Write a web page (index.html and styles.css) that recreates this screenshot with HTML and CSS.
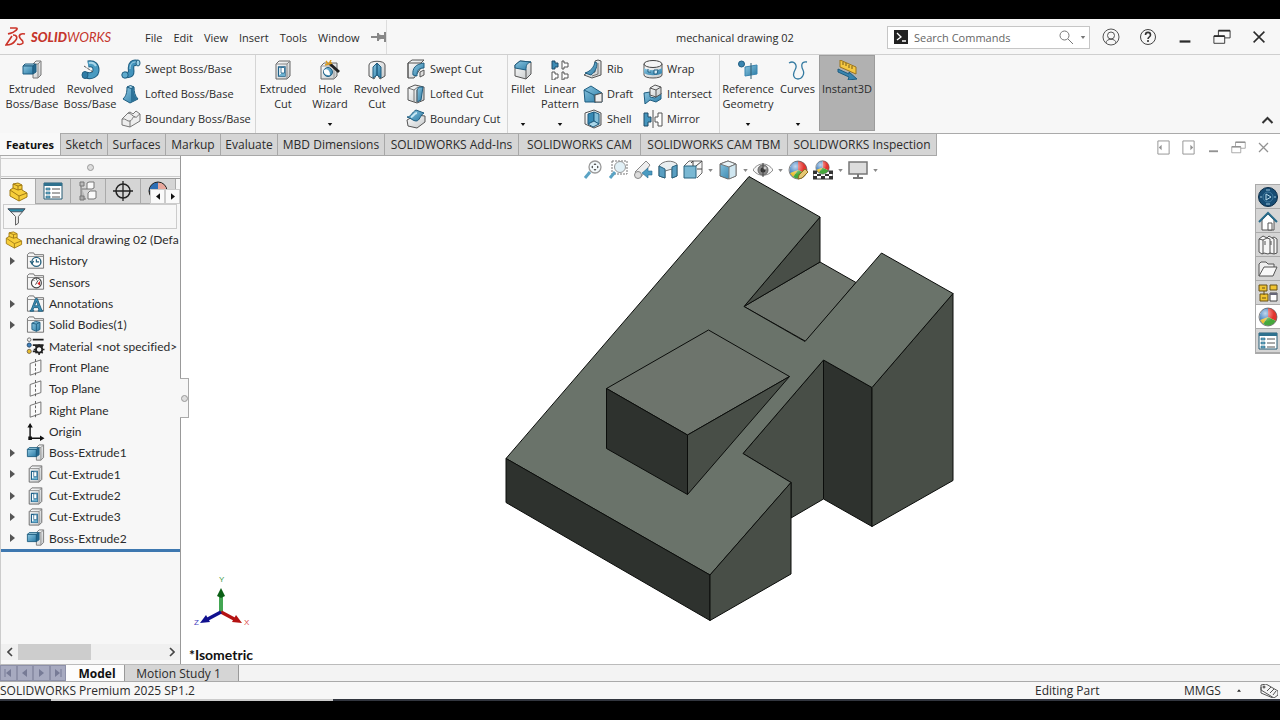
FILE: index.html
```html
<!DOCTYPE html>
<html lang="en">
<head>
<meta charset="utf-8">
<title>mechanical drawing 02 - SOLIDWORKS</title>
<link rel="stylesheet" href="styles.css">
</head>
<body>
<svg class="defs" aria-hidden="true">
  <defs>
    <linearGradient id="blue" x1="0" y1="0" x2="1" y2="1"><stop offset="0" stop-color="#8cc6e0"/><stop offset="1" stop-color="#2a7ba6"/></linearGradient>
    <linearGradient id="metal" x1="0" y1="0" x2="1" y2="1"><stop offset="0" stop-color="#fff"/><stop offset="1" stop-color="#c4c8ca"/></linearGradient>
    <radialGradient id="shine" cx=".35" cy=".3" r=".8"><stop offset="0" stop-color="#fff" stop-opacity=".7"/><stop offset=".6" stop-color="#fff" stop-opacity="0"/></radialGradient>
  </defs>
  <symbol id="i-extrude" viewBox="0 0 20 20"><path d="M11 4l3-3h5v14l-3 3h-5z" fill="url(#metal)" stroke="#777"/><path d="M16 4l3-3M16 4v14M11 4h5" fill="none" stroke="#888"/><path d="M1 6l2-2h10l-2 2z" fill="#a9d6e9" stroke="#1f5d80"/><path d="M1 6h10v8H1z" fill="url(#blue)" stroke="#1f5d80"/><path d="M11 6l3-2v8l-3 2z" fill="#23688f" stroke="#1f5d80"/></symbol>
  <symbol id="i-revolve" viewBox="0 0 20 20"><path d="M8 4c6-1 8 2 8 6s-4 7-10 5" fill="none" stroke="#1f5d80" stroke-width="7"/><path d="M8 4c6-1 8 2 8 6s-4 7-10 5" fill="none" stroke="#4a9bc1" stroke-width="5"/><path d="M9 3c4-1 6 1 7 3" fill="none" stroke="#a9d6e9" stroke-width="2"/><ellipse cx="5" cy="15" rx="3" ry="3.500" fill="#2e7ca6" stroke="#1f5d80"/><path d="M4 6l9 6" stroke="#555" stroke-dasharray="3 1"/></symbol>
  <symbol id="i-sweep" viewBox="0 0 20 20"><path d="M5 16c7 0 5-3 5-7s2-6 6-5" fill="none" stroke="#1f5d80" stroke-width="6.500"/><path d="M5 16c7 0 5-3 5-7s2-6 6-5" fill="none" stroke="#4394bd" stroke-width="4.500"/><path d="M9 10c0-5 2-7 6-7" fill="none" stroke="#a9d6e9"/><circle cx="4" cy="16" r="3.200" fill="#5fabcd" stroke="#1f5d80"/><ellipse cx="17" cy="4" rx="2" ry="3" fill="#9bd0e6" stroke="#1f5d80"/></symbol>
  <symbol id="i-loft" viewBox="0 0 20 20"><path d="M6 3c0 6-1 9-4 12l7 4 8-4c-3-3-4-7-4-12z" fill="url(#blue)" stroke="#1f5d80"/><path d="M10 4v14c4-2 6-3 6-3-3-3-4-7-3-12z" fill="#2d7298"/><path d="M6 3l3.500-1.500L13 3l-3 1.500z" fill="#a9d6e9" stroke="#1f5d80"/></symbol>
  <symbol id="i-boundary" viewBox="0 0 20 20"><path d="M1 10l6-6 2-1 3 2 3-3 4 3v7l-10 6-8-2z" fill="#eee" stroke="#777"/><path d="M1 10c4-1 5 3 8 2s2-5 5-4 2-2 5-3M9 12v6M7 4c3 0 4 3 7 4" fill="none" stroke="#777"/></symbol>
  <symbol id="i-cut" viewBox="0 0 20 20"><path d="M3 4l3-3h11v15l-3 3H3z" fill="url(#metal)" stroke="#666"/><path d="M3 4h11v15M14 4l3-3" fill="none" stroke="#888"/><path d="M5.500 7h6.500v9H5.500z" fill="#fff" stroke="#1f6088" stroke-width="1.300"/><path d="M5.500 16l3-3V7H12v9z" fill="#6db2d1"/><path d="M8 7.500h3.500V13H8z" fill="#fff" stroke="#1f6088" stroke-width=".8"/></symbol>
  <symbol id="i-hole" viewBox="0 0 20 20"><path d="M1 6l3-3h13v13l-3 3H1z" fill="url(#metal)" stroke="#666"/><path d="M1 6h13v13" fill="none" stroke="#999"/><circle cx="8" cy="12" r="4.500" fill="url(#blue)" stroke="#1f5d80"/><path d="M4 10c3-2 6 0 6 5-4 1-7-2-6-5z" fill="#fff"/><path d="M9 3l10 9" stroke="#222" stroke-width="3"/><path d="M6 1l2 3M11 0L9 4M5 5l4-1M12 3L9 4" stroke="#d99c22" stroke-width="1.500"/></symbol>
  <symbol id="i-revcut" viewBox="0 0 20 20"><path d="M2 5c0-5 16-5 16 0v11l-5 3-3-5-3 5-5-3z" fill="url(#metal)" stroke="#555"/><path d="M6 7l4-4v12l-4 3zM14 7l-4-4v12l4 3z" fill="url(#blue)" stroke="#1f5d80"/></symbol>
  <symbol id="i-swcut" viewBox="0 0 20 20"><path d="M2 4l4-3h12l-3 3v5L8 19H2z" fill="url(#metal)" stroke="#555"/><path d="M7 16c-1-7 3-11 11-12v5c-6 0-7 3-7 8z" fill="url(#blue)" stroke="#1f5d80"/><path d="M2 4h13M2 4v15" stroke="#555"/><path d="M14 13l4-2v5l-4 2z" fill="#ddd" stroke="#555"/></symbol>
  <symbol id="i-lcut" viewBox="0 0 20 20"><path d="M2 4l7-3 9 2v13l-7 3-9-3z" fill="url(#metal)" stroke="#555"/><path d="M11 6l2-3h4l-2 13-4 2z" fill="url(#blue)" stroke="#1f5d80"/><path d="M2 4l6 2v12M8 6l4-3M11 6v13" fill="none" stroke="#777"/></symbol>
  <symbol id="i-bcut" viewBox="0 0 20 20"><path d="M1 11l9-5 9 1v6l-8 6-9-2z" fill="url(#metal)" stroke="#555"/><path d="M1 8c4 0 5-5 9-7l8 3c-4 2-4 8-8 8-3 0-5-3-9-4z" fill="url(#blue)" stroke="#1f5d80"/><path d="M5 8c2 0 3-4 6-4" fill="none" stroke="#c9e8f4" stroke-width="2"/></symbol>
  <symbol id="i-fillet" viewBox="0 0 20 20"><path d="M2 5l5-4 11 1v12l-5 5-11-3z" fill="url(#metal)" stroke="#555"/><path d="M2 5l5-4 11 1c-4 1-5 3-5 8L2 8z" fill="url(#blue)" stroke="#1f5d80"/><path d="M13 10v9" stroke="#555"/></symbol>
  <symbol id="i-pattern" viewBox="0 0 20 20"><path d="M2 1h3v2h3v4H5v2H2z" fill="#3c8bb4" stroke="#1f4b66"/><path d="M12 1h2v2h4v4h-4v2h-2zM2 12h3v2h3v4H5v2H2zM12 12h2v2h4v4h-4v2h-2z" fill="#fff" stroke="#555"/></symbol>
  <symbol id="i-rib" viewBox="0 0 20 20"><path d="M12 2l3-1 3 1v14l-9 3-8-3 3-2 8-1z" fill="url(#metal)" stroke="#555"/><path d="M12 3c-1 5-4 9-10 11l6 2c4-3 6-7 6-12z" fill="url(#blue)" stroke="#1f5d80"/><path d="M15 4v11l-6 2" fill="none" stroke="#777"/></symbol>
  <symbol id="i-draft" viewBox="0 0 20 20"><path d="M1 6l7-4 11 7v9H2z" fill="url(#blue)" stroke="#1f5d80"/><path d="M1 6l10 5 8-2M11 11l1 8" fill="none" stroke="#1f5d80"/><path d="M12 11l7-2v9h-7z" fill="#eee" stroke="#555"/></symbol>
  <symbol id="i-shell" viewBox="0 0 20 20"><path d="M2 4l9-3 7 3v12l-7 3-9-4z" fill="url(#metal)" stroke="#555"/><path d="M5 5l6-2v9l-6 3z" fill="#368ab5" stroke="#1f5d80"/><path d="M11 3l5 2v10l-5-3z" fill="#83bfd9" stroke="#1f5d80"/><path d="M5 15l6-3 5 3-6 3z" fill="#a9d6e9" stroke="#1f5d80"/></symbol>
  <symbol id="i-wrap" viewBox="0 0 20 20"><path d="M1 5v11c0 4 18 4 18 0V5z" fill="url(#metal)" stroke="#555"/><ellipse cx="10" cy="5" rx="9" ry="3.500" fill="#f5f5f5" stroke="#444"/><path d="M1 9c4 3 14 3 18 0v5c-4 3-14 3-18 0z" fill="url(#blue)"/><path d="M5 10v3h3M11 11h4l-1 4h-3z" fill="#d9eef7" stroke="#1f5d80"/></symbol>
  <symbol id="i-intersect" viewBox="0 0 20 20"><path d="M1 9l6-1v5l5 1 6-5v6l-5 3-6-2-5 4z" fill="url(#blue)" stroke="#1f5d80"/><path d="M7 4l5-3 6 2v7l-5 3-6-2z" fill="url(#metal)" stroke="#555"/><path d="M7 4l6 2v7M13 6l5-3" fill="none" stroke="#555"/></symbol>
  <symbol id="i-mirror" viewBox="0 0 20 20"><path d="M1 4h4v4h3v5H5v4H1z" fill="#4696be" stroke="#1f4b66"/><path d="M19 4h-4v4h-3v5h3v4h4z" fill="#fff" stroke="#555"/><path d="M10 1v18" stroke="#555"/></symbol>
  <symbol id="i-ref" viewBox="0 0 20 20"><circle cx="3.500" cy="4" r="3" fill="#3985b0" stroke="#1f5d80"/><path d="M7 7l12-2v9L7 16z" fill="url(#blue)" stroke="#3985b0"/><path d="M13 3v16" stroke="#315c70"/></symbol>
  <symbol id="i-curves" viewBox="0 0 20 20"><path d="M1 3c5-3 9 2 6 7s-1 9 3 9 7-5 5-9-2-9 4-8" fill="none" stroke="#347aa1" stroke-width="1.300"/></symbol>
  <symbol id="i-instant" viewBox="0 0 20 20"><path d="M3 0l16 7v7L3 7z" fill="#f5c842" stroke="#9a741e"/><path d="M6 2v3M9 3v3M12 5v3M15 6v3" stroke="#745b18"/><path d="M1 9l11 5v-2l8 7-9 1 1-3L1 12z" fill="#3885b0" stroke="#1f5d80"/></symbol>
  <symbol id="i-part" viewBox="0 0 20 20"><path d="M2 8l3-2V2l5-1 4 2v5l5 3v4l-8 4-9-5z" fill="#f7ce3a" stroke="#a07a15"/><path d="M2 8l9 6 8-3M11 14v5M5 6l5 2 4-1M5 2l5 2v4M10 4l4-1" fill="none" stroke="#a07a15"/></symbol>
  <symbol id="i-list" viewBox="0 0 20 20"><path d="M1 2h18v16H1z" fill="#fff" stroke="#245b74"/><path d="M1 2h18v3H1z" fill="#2f718e"/><path d="M3 7h4v2H3zM3 11h4v2H3zM3 15h4v2H3z" fill="#65abc8" stroke="#27627e" stroke-width=".6"/><path d="M9 8h8M9 12h8M9 16h8" stroke="#555"/></symbol>
  <symbol id="i-config" viewBox="0 0 20 20"><path d="M2 1h4v4H2zM3 5v13h5M4 8h5" fill="#bbb" stroke="#777"/><path d="M9 2l2-1h5v6l-2 1H9zM10 12l2-2h6v7l-2 1h-6z" fill="#fafafa" stroke="#777"/><path d="M2 15h4v4H2z" fill="#aaa" stroke="#777"/></symbol>
  <symbol id="i-target" viewBox="0 0 20 20"><circle cx="10" cy="10" r="7" fill="none" stroke="#222" stroke-width="1.500"/><path d="M10 0v20M0 10h20" stroke="#222" stroke-width="1.300"/></symbol>
  <symbol id="i-ball" viewBox="0 0 20 20"><path d="M10 10V1a9 9 0 0 1 8 13z" fill="#e3342e"/><path d="M10 10l8 4a9 9 0 0 1-13 3z" fill="#45a83c"/><path d="M10 10l-5 7A9 9 0 0 1 10 1z" fill="#347ac0"/><path d="M10 10l-5 7-3-4z" fill="#edc12e"/><circle cx="10" cy="10" r="9" fill="url(#shine)" stroke="#555" stroke-width=".7"/></symbol>
  <symbol id="i-display" viewBox="0 0 20 20"><path d="M10 10V1a9 9 0 0 1 9 9z" fill="#e8a79c"/><path d="M10 10V1a9 9 0 0 0-9 9z" fill="#2d6fb5"/><path d="M1 10h18a9 9 0 0 1-18 0z" fill="#333"/><circle cx="10" cy="10" r="9" fill="none" stroke="#222"/></symbol>
  <symbol id="i-ballpen" viewBox="0 0 20 20"><use href="#i-ball"/><path d="M10 19l1-4 6-6 3 3-6 6z" fill="#e5c873" stroke="#8c6d22"/></symbol>
  <symbol id="i-scene" viewBox="0 0 20 20"><path d="M0 11h20v8H0z" fill="#fff" stroke="#333"/><path d="M0 11h4v3H0zM16 11h4v3h-4zM4 14h4v2H4zM12 14h4v2h-4zM0 16h4v3H0zM8 16h4v3H8zM16 16h4v3h-4z" fill="#333"/><svg x="2" y="0" width="15" height="15"><use href="#i-ball"/></svg></symbol>
  <symbol id="i-filter" viewBox="0 0 20 20"><path d="M1 2h18l-7 8v7l-3 2v-9z" fill="#f4f4f4" stroke="#555"/><path d="M1 2h18l-3 3H4z" fill="#2e8eaa" stroke="#456"/></symbol>
  <symbol id="i-folder" viewBox="0 0 20 20"><path d="M1 18V3l2-2h5l1 2h10v15z" fill="#f5f5f5" stroke="#666"/><path d="M1 5h18" stroke="#888"/></symbol>
  <symbol id="i-history" viewBox="0 0 20 20"><use href="#i-folder"/><circle cx="11" cy="11" r="5" fill="#fff" stroke="#27627e" stroke-width="1.500"/><path d="M11 8v3h3M4 10l2 3 2-3" fill="none" stroke="#27627e" stroke-width="1.400"/></symbol>
  <symbol id="i-sensor" viewBox="0 0 20 20"><use href="#i-folder"/><circle cx="11" cy="11" r="5.500" fill="#fff" stroke="#444" stroke-width="1.300"/><path d="M8 8l1 1M11 6v2" stroke="#444"/><path d="M10 13l3-5" stroke="#333"/><path d="M15 9v5l-3-2z" fill="#d22"/></symbol>
  <symbol id="i-annot" viewBox="0 0 20 20"><use href="#i-folder"/><path d="M4 18h4v-1H7l1-3h5l1 3h-1v1h5v-1h-1L12 4h-2L5 17H4zM9 12l2-5 2 5z" fill="#3c91b7" stroke="#1f5d80" fill-rule="evenodd"/></symbol>
  <symbol id="i-solid" viewBox="0 0 20 20"><use href="#i-folder"/><path d="M6 8l4-2 5 1v8l-4 2-5-2z" fill="url(#blue)" stroke="#1f5d80"/><path d="M6 8l5 1v8M11 9l4-2" fill="none" stroke="#1f5d80"/></symbol>
  <symbol id="i-material" viewBox="0 0 20 20"><path d="M7 3h12M7 9h12M7 16h5" stroke="#222" stroke-width="2"/><circle cx="3" cy="3" r="2" fill="#eee" stroke="#666"/><circle cx="3" cy="9" r="2.300" fill="#3d80bb" stroke="#246"/><circle cx="3" cy="16" r="2.300" fill="#e7bd2a" stroke="#765"/><circle cx="14" cy="14" r="3.500" fill="#f7f7f7" stroke="#222" stroke-width="2"/><path d="M14 8v3M14 17v3M8 14h3M17 14h3M10 10l2 2M16 16l2 2M10 18l2-2M16 12l2-2" stroke="#222" stroke-width="1.700"/></symbol>
  <symbol id="i-plane" viewBox="0 0 20 20"><path d="M4 5l12-4v13L4 18z" fill="#fafafa" stroke="#666"/><path d="M10 0v20" stroke="#555" stroke-dasharray="3 2"/></symbol>
  <symbol id="i-origin" viewBox="0 0 20 20"><path d="M4 17V3M4 17h12" stroke="#111" stroke-width="1.600"/><path d="M1 5l3-5 3 5zM15 14l5 3-5 3zM2 15h4v4H2z" fill="#111"/></symbol>
  <symbol id="i-zoomfit" viewBox="0 0 20 20"><circle cx="12" cy="7" r="6" fill="#f4fafc" stroke="#999" stroke-width="1.300"/><path d="M7 12l-5 6" stroke="#5aa3c4" stroke-width="3"/><path d="M12 3l1.500 2h-3zM12 11l1.500-2h-3zM8 7l2-1.500v3zM16 7l-2-1.500v3z" fill="#555"/></symbol>
  <symbol id="i-zoomarea" viewBox="0 0 20 20"><path d="M4 1h15v13H4z" fill="none" stroke="#777" stroke-dasharray="2 1"/><circle cx="12" cy="7" r="5.500" fill="#e1f0f6" stroke="#999"/><path d="M7 12l-5 6" stroke="#5aa3c4" stroke-width="3"/></symbol>
  <symbol id="i-prev" viewBox="0 0 20 20"><path d="M2 12L13 1l4 4L8 17z" fill="#eee" stroke="#888"/><circle cx="5" cy="15" r="3.500" fill="#ddd" stroke="#888"/><path d="M19 11h-4V8l-6 5 6 5v-3h4z" fill="#4a9bc1" stroke="#286b90" stroke-width=".6"/></symbol>
  <symbol id="i-section" viewBox="0 0 20 20"><path d="M1 6c4-6 14-6 18-2v12l-5 2v-9l-7 2v7l-6-2z" fill="#e9eef0" stroke="#777"/><path d="M1 6l6 3v9l-6-2zM14 7l5-2v11l-5 2z" fill="#5a9fc2" stroke="#28627f"/></symbol>
  <symbol id="i-orient" viewBox="0 0 20 20"><path d="M1 6l5-5h13v12l-5 5" fill="#f7f7f7" stroke="#666"/><path d="M1 6h12v12H1z" fill="#7ab8d3" stroke="#28627f"/><path d="M13 6l6-5M10 6V1M19 9h-5M10 1l-2 2" stroke="#444"/></symbol>
  <symbol id="i-cube" viewBox="0 0 20 20"><path d="M2 4l8-3 8 3v12l-8 3-8-3z" fill="url(#blue)" stroke="#666"/><path d="M2 4l8-3 8 3-7 3z" fill="#eaf4f8" stroke="#777"/><path d="M11 7l7-3v12l-7 3z" fill="#cfe6f0" stroke="#777"/></symbol>
  <symbol id="i-eye" viewBox="0 0 20 20"><path d="M0 10c5-8 15-8 20 0-5 7-15 7-20 0z" fill="#f6f6f6" stroke="#888"/><circle cx="10" cy="10" r="5" fill="#888" stroke="#666"/><circle cx="10" cy="10" r="2.500" fill="#333"/><path d="M10 3v14" stroke="#444"/><circle cx="12" cy="8" r="1.500" fill="#ccc"/></symbol>
  <symbol id="i-monitor" viewBox="0 0 20 20"><path d="M1 2h18v12H1z" fill="#ddd" stroke="#777" stroke-width="1.500"/><path d="M9 14h2v3h4v2H5v-2h4z" fill="#777"/></symbol>
  <symbol id="i-globe" viewBox="0 0 20 20"><circle cx="10" cy="10" r="9.500" fill="#174d74" stroke="#0b2d48"/><circle cx="10" cy="10" r="5" fill="none" stroke="#3f7a9f"/><path d="M8 7l5 3-5 3z" fill="none" stroke="#b8dcec"/><path d="M2 10h2M16 10h2M8 3h4M8 17h4" stroke="#9bc4da"/></symbol>
  <symbol id="i-home" viewBox="0 0 20 20"><path d="M4 9v10h12V9l-6-6z" fill="#fff" stroke="#555"/><path d="M1 11l9-9 9 9" fill="none" stroke="#286b8a" stroke-width="2"/><path d="M10 12h4v7h-4z" fill="#fff" stroke="#555"/></symbol>
  <symbol id="i-books" viewBox="0 0 20 20"><path d="M1 4l4-3 4 2 2-2 3 2 2-1 3 2v14l-3 1-4-1-2 1-4-1-2 1-3-2z" fill="#f6f6f6" stroke="#555"/><path d="M1 4l4 1v14M5 5l4-2M9 3l3 1v15M14 3l2 1v15M7 6v4M13 6v4" fill="none" stroke="#555"/></symbol>
  <symbol id="i-open" viewBox="0 0 20 20"><path d="M1 17V5l2-2h5l2 2h6v3" fill="#eee" stroke="#555"/><path d="M1 17L6 8h13l-4 9z" fill="#f8f8f8" stroke="#555"/></symbol>
  <symbol id="i-palette" viewBox="0 0 20 20"><path d="M1 2h8v6H1zM12 2h7v5h-7zM2 11h8v7H2z" fill="#f0c431" stroke="#665016"/><path d="M4 5h3M6 8v4M4 15h4" stroke="#665016"/><path d="M12 10h7v8h-7z" fill="#fff" stroke="#444"/><path d="M12 10h7v2h-7z" fill="#667"/></symbol>
  <symbol id="i-restore" viewBox="0 0 20 20"><path d="M1 9h12v8H1zM6 9V3h13v8h-6" fill="none" stroke="currentColor"/><path d="M1 9h12M6 3h13" stroke="currentColor" stroke-width="2"/></symbol>
  <symbol id="i-close" viewBox="0 0 20 20"><path d="M4 4l12 12M16 4L4 16" fill="none" stroke="currentColor" stroke-width="1.700"/></symbol>
  <symbol id="i-min" viewBox="0 0 20 20"><path d="M4 15h12" stroke="currentColor" stroke-width="2.500"/></symbol>
  <symbol id="i-down" viewBox="0 0 6 4"><path d="M0 0h6L3 4z" fill="currentColor"/></symbol>
  <symbol id="i-right" viewBox="0 0 5 8"><path d="M0 0l5 4-5 4z" fill="currentColor"/></symbol>
</svg>

<div class="app">
  <header class="titlebar">
    <div class="brand">
      <svg class="ds" viewBox="0 0 21 22" aria-hidden="true"><g fill="none" stroke="#cb3328" stroke-width="1.600"><path d="M5 2h6c2 0 1 2-1 3-2 2-4 2-7 3"/><path d="M8 9c4 0 5 3 2 6-2 3-5 4-9 4l6-9"/><path d="M20 8c-4-1-7 1-5 4 1 2 4 3 3 5-1 1-3 2-6 1"/></g></svg>
      <span><b>SOLID</b>WORKS</span>
    </div>
    <nav class="menu"><button>File</button><button>Edit</button><button>View</button><button>Insert</button><button>Tools</button><button>Window</button>
      <button aria-label="Pin menu"><svg class="pin" viewBox="0 0 16 12"><path d="M0 6h7M7 2v8M14 1v10" stroke="#888" stroke-width="2"/><path d="M7 3l3 1h4v4h-4l-3 1z" fill="#888"/></svg></button>
    </nav>
    <h1 class="doc-title">mechanical drawing 02</h1>
    <div class="search">
      <svg class="prompt" viewBox="0 0 14 14" aria-hidden="true"><path d="M0 0h14v14H0z" fill="#222"/><path d="M3 3l4 4-4 3M8 11h4" fill="none" stroke="#fff" stroke-width="1.300"/></svg>
      <input type="text" placeholder="Search Commands" aria-label="Search Commands">
      <svg class="lens" viewBox="0 0 14 14" aria-hidden="true"><circle cx="5.500" cy="5.500" r="4.500" fill="none" stroke="#777"/><path d="M9 9l5 5" stroke="#777"/></svg>
      <svg class="caret" aria-hidden="true"><use href="#i-down"/></svg>
    </div>
    <div class="window-buttons">
      <button aria-label="Account"><svg viewBox="0 0 18 18"><g fill="none" stroke="#555"><circle cx="9" cy="9" r="8"/><circle cx="9" cy="7.500" r="3.500"/><path d="M4 15c0-5 10-5 10 0"/></g></svg></button>
      <button aria-label="Help"><svg viewBox="0 0 18 18"><circle cx="9" cy="9" r="7.500" fill="none" stroke="#444"/><path d="M6.500 7c0-3.500 5-3.500 5 0 0 2-2.500 2-2.500 4M9 12v2" fill="none" stroke="#333" stroke-width="1.600"/></svg></button>
      <button aria-label="Minimize"><svg><use href="#i-min"/></svg></button>
      <button aria-label="Restore"><svg><use href="#i-restore"/></svg></button>
      <button aria-label="Close"><svg><use href="#i-close"/></svg></button>
    </div>
  </header>

  <section class="ribbon" aria-label="Features commands">
    <div class="group g-boss">
      <button class="big"><svg><use href="#i-extrude"/></svg><span>Extruded<br>Boss/Base</span></button>
      <button class="big"><svg><use href="#i-revolve"/></svg><span>Revolved<br>Boss/Base</span></button>
      <div class="stack">
        <button><svg><use href="#i-sweep"/></svg>Swept Boss/Base</button>
        <button><svg><use href="#i-loft"/></svg>Lofted Boss/Base</button>
        <button><svg><use href="#i-boundary"/></svg>Boundary Boss/Base</button>
      </div>
    </div>
    <div class="group g-cut">
      <button class="big"><svg><use href="#i-cut"/></svg><span>Extruded<br>Cut</span></button>
      <button class="big narrow"><svg><use href="#i-hole"/></svg><span>Hole<br>Wizard</span><svg class="caret"><use href="#i-down"/></svg></button>
      <button class="big"><svg><use href="#i-revcut"/></svg><span>Revolved<br>Cut</span></button>
      <div class="stack">
        <button><svg><use href="#i-swcut"/></svg>Swept Cut</button>
        <button><svg><use href="#i-lcut"/></svg>Lofted Cut</button>
        <button><svg><use href="#i-bcut"/></svg>Boundary Cut</button>
      </div>
    </div>
    <div class="group g-mod">
      <button class="big slim"><svg><use href="#i-fillet"/></svg><span>Fillet</span><svg class="caret"><use href="#i-down"/></svg></button>
      <button class="big"><svg><use href="#i-pattern"/></svg><span>Linear<br>Pattern</span><svg class="caret"><use href="#i-down"/></svg></button>
      <div class="stack short">
        <button><svg><use href="#i-rib"/></svg>Rib</button>
        <button><svg><use href="#i-draft"/></svg>Draft</button>
        <button><svg><use href="#i-shell"/></svg>Shell</button>
      </div>
      <div class="stack">
        <button><svg><use href="#i-wrap"/></svg>Wrap</button>
        <button><svg><use href="#i-intersect"/></svg>Intersect</button>
        <button><svg><use href="#i-mirror"/></svg>Mirror</button>
      </div>
    </div>
    <div class="group g-ref">
      <button class="big"><svg><use href="#i-ref"/></svg><span>Reference<br>Geometry</span><svg class="caret"><use href="#i-down"/></svg></button>
      <button class="big narrow"><svg><use href="#i-curves"/></svg><span>Curves</span><svg class="caret"><use href="#i-down"/></svg></button>
      <button class="big pressed" aria-pressed="true"><svg><use href="#i-instant"/></svg><span>Instant3D</span></button>
    </div>
    <button class="collapse" aria-label="Collapse ribbon"><svg viewBox="0 0 12 8"><path d="M1 7l5-5 5 5" fill="none" stroke="#333" stroke-width="2"/></svg></button>
  </section>

  <div class="tabrow">
    <div class="tabs" role="tablist">
      <button class="active" role="tab" aria-selected="true">Features</button><button role="tab">Sketch</button><button role="tab">Surfaces</button><button role="tab">Markup</button><button role="tab">Evaluate</button><button role="tab">MBD Dimensions</button><button role="tab">SOLIDWORKS Add-Ins</button><button role="tab">SOLIDWORKS CAM</button><button role="tab">SOLIDWORKS CAM TBM</button><button role="tab">SOLIDWORKS Inspection</button>
    </div>
    <div class="doc-buttons">
      <button aria-label="Dock left"><svg viewBox="0 0 16 16"><path d="M2 1h12v14H2z" fill="none" stroke="currentColor"/><path d="M6 5v6L3 8z" fill="currentColor"/></svg></button>
      <button aria-label="Dock right"><svg viewBox="0 0 16 16"><path d="M2 1h12v14H2z" fill="none" stroke="currentColor"/><path d="M10 5v6l3-3z" fill="currentColor"/></svg></button>
      <button aria-label="Minimize document"><svg><use href="#i-min"/></svg></button>
      <button aria-label="Restore document"><svg><use href="#i-restore"/></svg></button>
      <button aria-label="Close document"><svg><use href="#i-close"/></svg></button>
    </div>
  </div>

  <main class="workspace">
    <aside class="panel">
      <div class="grip"><i class="dot"></i></div>
      <div class="panel-tabs">
        <button class="active" aria-label="Feature tree"><svg><use href="#i-part"/></svg></button>
        <button aria-label="Properties"><svg><use href="#i-list"/></svg></button>
        <button aria-label="Configurations"><svg><use href="#i-config"/></svg></button>
        <button aria-label="Dimensions"><svg><use href="#i-target"/></svg></button>
        <button aria-label="Display"><svg><use href="#i-display"/></svg></button>
        <div class="scrollers"><button aria-label="Previous tabs"><svg class="flip"><use href="#i-right"/></svg></button><button aria-label="Next tabs"><svg><use href="#i-right"/></svg></button></div>
      </div>
      <label class="filter"><svg><use href="#i-filter"/></svg><input type="text" aria-label="Filter tree"></label>
      <ul class="tree">
        <li class="root"><svg><use href="#i-part"/></svg><span>mechanical drawing 02 (Defa</span></li>
        <li class="has"><svg><use href="#i-history"/></svg>History</li>
        <li><svg><use href="#i-sensor"/></svg>Sensors</li>
        <li class="has"><svg><use href="#i-annot"/></svg>Annotations</li>
        <li class="has"><svg><use href="#i-solid"/></svg>Solid Bodies(1)</li>
        <li><svg><use href="#i-material"/></svg>Material &lt;not specified&gt;</li>
        <li><svg><use href="#i-plane"/></svg>Front Plane</li>
        <li><svg><use href="#i-plane"/></svg>Top Plane</li>
        <li><svg><use href="#i-plane"/></svg>Right Plane</li>
        <li><svg><use href="#i-origin"/></svg>Origin</li>
        <li class="has"><svg><use href="#i-extrude"/></svg>Boss-Extrude1</li>
        <li class="has"><svg><use href="#i-cut"/></svg>Cut-Extrude1</li>
        <li class="has"><svg><use href="#i-cut"/></svg>Cut-Extrude2</li>
        <li class="has"><svg><use href="#i-cut"/></svg>Cut-Extrude3</li>
        <li class="has"><svg><use href="#i-extrude"/></svg>Boss-Extrude2</li>
      </ul>
      <div class="hscroll">
        <button aria-label="Scroll left"><svg viewBox="0 0 6 10"><path d="M5 1L1 5l4 4" fill="none" stroke="#444" stroke-width="1.600"/></svg></button>
        <div class="track"><div class="thumb"></div></div>
        <button aria-label="Scroll right"><svg viewBox="0 0 6 10"><path d="M1 1l4 4-4 4" fill="none" stroke="#444" stroke-width="1.600"/></svg></button>
      </div>
      <div class="splitter"><i class="dot"></i></div>
    </aside>

    <section class="viewport" aria-label="Graphics area">
      <div class="headsup">
        <button aria-label="Zoom to fit"><svg><use href="#i-zoomfit"/></svg></button>
        <button aria-label="Zoom to area"><svg><use href="#i-zoomarea"/></svg></button>
        <button aria-label="Previous view"><svg><use href="#i-prev"/></svg></button>
        <button aria-label="Section view"><svg><use href="#i-section"/></svg></button>
        <button class="drop" aria-label="View orientation"><svg><use href="#i-orient"/></svg><svg class="caret"><use href="#i-down"/></svg></button>
        <button class="drop" aria-label="Display style"><svg><use href="#i-cube"/></svg><svg class="caret"><use href="#i-down"/></svg></button>
        <button class="drop" aria-label="Hide or show items"><svg><use href="#i-eye"/></svg><svg class="caret"><use href="#i-down"/></svg></button>
        <button aria-label="Edit appearance"><svg><use href="#i-ballpen"/></svg></button>
        <button class="drop" aria-label="Apply scene"><svg><use href="#i-scene"/></svg><svg class="caret"><use href="#i-down"/></svg></button>
        <button class="drop" aria-label="View settings"><svg><use href="#i-monitor"/></svg><svg class="caret"><use href="#i-down"/></svg></button>
      </div>
      <svg class="model" viewBox="505 175 452 447" role="img" aria-label="Isometric view of the part">
        <g stroke="#0b0d0b" stroke-linejoin="round">
          <path fill="#6d746c" d="M744 306.500L820 262l36 20.500-50 59z"/>
          <path fill="#484e47" d="M820 217v45l-76 44.500z"/>
          <path fill="#484e47" d="M743 453.500L823.500 360v139L791 518v-35.500z"/>
          <path fill="#2e322e" d="M823.500 360l48.500 27.500v139L823.500 499z"/>
          <path fill="#484e47" d="M872 387.500l81-94v187l-81 46z"/>
          <path fill="#6a736a" d="M749 176.500l71 40.500-76 89.500 61 35 76.500-88.500 71.500 40.500-81 94-48.500-27.500-80.500 93.500 48 29-81 92.500-204-116.500z"/>
          <path fill="#2e322e" d="M506 458.500L710 575v45.500L506 502.500z"/>
          <path fill="#484e47" d="M710 575l81-92.500V574l-81 46.500z"/>
          <path fill="#6d746c" d="M708.500 330l81 46.500-102 58.500-81-46.500z"/>
          <path fill="#2e322e" d="M606.500 388.500l81 46.500v59.500l-81-46z"/>
          <path fill="#484e47" d="M687.500 435l102-58.500-102 118z"/>
        </g>
      </svg>
      <div class="triad">
        <svg viewBox="0 0 58 54" role="img" aria-label="Axis triad">
          <path d="M28 38V20" stroke="#43a653" stroke-width="4"/><path d="M28 38l15 8" stroke="#b41212" stroke-width="3.500"/><path d="M28 38l-15 8" stroke="#10108f" stroke-width="3.500"/>
          <path d="M24 22l4-8 4 8-4 2z" fill="#0b5f16"/><path d="M43 41l6 8-10-1z" fill="#b41212"/><path d="M13 41l4 7-10 1z" fill="#10108f"/>
          <text x="26" y="8" fill="#3d9b4c">Y</text><text x="51" y="51" fill="#e04a4a">X</text><text x="1" y="51" fill="#4444c0">Z</text>
        </svg>
        <span>*Isometric</span>
      </div>
      <nav class="taskpane" aria-label="Task pane">
        <button aria-label="3DEXPERIENCE"><svg><use href="#i-globe"/></svg></button>
        <button aria-label="Home"><svg><use href="#i-home"/></svg></button>
        <button aria-label="Design library"><svg><use href="#i-books"/></svg></button>
        <button aria-label="File explorer"><svg><use href="#i-open"/></svg></button>
        <button aria-label="View palette"><svg><use href="#i-palette"/></svg></button>
        <button class="active" aria-label="Appearances"><svg><use href="#i-ball"/></svg></button>
        <button aria-label="Custom properties"><svg><use href="#i-list"/></svg></button>
      </nav>
    </section>
  </main>

  <div class="sheets">
    <div class="steps">
      <button aria-label="First"><svg viewBox="0 0 10 10"><path d="M2 1v8" stroke="currentColor"/><path d="M8 1v8L3 5z" fill="currentColor"/></svg></button>
      <button aria-label="Previous"><svg viewBox="0 0 10 10"><path d="M7 1v8L2 5z" fill="currentColor"/></svg></button>
      <button aria-label="Next"><svg viewBox="0 0 10 10"><path d="M3 1v8l5-4z" fill="currentColor"/></svg></button>
      <button aria-label="Last"><svg viewBox="0 0 10 10"><path d="M8 1v8" stroke="currentColor"/><path d="M2 1v8l5-4z" fill="currentColor"/></svg></button>
    </div>
    <button class="sheet active">Model</button>
    <button class="sheet">Motion Study 1</button>
  </div>
  <footer class="status">
    <span class="version">SOLIDWORKS Premium 2025 SP1.2</span>
    <span class="mode">Editing Part</span>
    <button class="units">MMGS<svg class="caret flip-v"><use href="#i-down"/></svg></button>
    <button class="tag" aria-label="Tags"><svg viewBox="0 0 18 14"><path d="M1 1l5-1 12 7v4l-4 3L1 6z" fill="#f4f4f4" stroke="#555"/><circle cx="4" cy="3" r="1" fill="none" stroke="#333"/><path d="M7 7l4-4M10 9l4-4M13 11l3-4M1 3v6l12 5" fill="none" stroke="#555"/></svg></button>
  </footer>
  <div class="edge"></div>
</div>
</body>
</html>
```
FILE: styles.css
```css
* { box-sizing: border-box; }
body {
  margin: 0;
  background: #000;
  color: #2b2b2b;
  font: 12px/15px "Open Sans", "Noto Sans", sans-serif;
}
button, input { font: inherit; color: inherit; border: 0; background: none; padding: 0; margin: 0; }
button { white-space: nowrap; }
svg { display: block; flex: none; }
.defs { position: absolute; width: 0; height: 0; }
.caret { width: 6px; height: 3px; }
.app {
  min-height: 100vh;
  padding: 19px 0;
  display: flex;
  flex-direction: column;
}

/* title bar */
.titlebar { display: flex; align-items: center; height: 36px; padding-top: 1px; background: #f7f7f7; border-bottom: 1px solid #cfcfcf; font-size: 11px; }
.brand { display: flex; align-items: center; gap: 5px; width: 136px; padding-left: 5px; color: #c5352c; font: italic 13px/20px Lato, sans-serif; }
.brand b { font-weight: 900; }
.ds { width: 21px; height: 22px; }
.menu { display: flex; align-items: center; align-self: stretch; gap: 11px; width: 251px; padding-left: 9px; border-right: 1px solid #ddd; }
.pin { width: 16px; height: 12px; }
.doc-title { flex: 1; margin: 0; padding-left: 289px; font: inherit; }
.search { display: flex; align-items: center; width: 203px; height: 23px; margin-right: 12px; padding: 0 3px 0 6px; background: #fff; border: 1px solid #c6c6c6; }
.search input { flex: 1; min-width: 0; padding: 0 6px; outline: 0; }
.search input::placeholder { color: #666; opacity: 1; }
.prompt, .lens { width: 14px; height: 14px; }
.search .caret { margin-left: 7px; color: #777; }
.window-buttons { display: flex; align-items: center; gap: 19px; margin-right: 12px; }
.window-buttons svg { width: 18px; height: 18px; }

/* ribbon */
.ribbon { display: flex; height: 78px; background: #f7f7f7; font-size: 11px; }
.group { display: flex; border-right: 1px solid #d5d5d5; }
.g-boss { width: 256px; padding-left: 3px; }
.g-cut { width: 252px; }
.g-mod { width: 212px; }
.g-ref { border: 0; }
.big { display: flex; flex-direction: column; align-items: center; width: 54px; padding: 5px 0 7px; }
.big svg { width: 20px; height: 20px; }
.big span { display: block; padding-top: 1px; }
.big .caret { width: 6px; height: 3px; margin-top: auto; color: #111; }
.g-boss .big { width: 58px; }
.g-mod .big { width: 44px; }
.g-ref .big { width: 56px; }
.big.narrow { width: 40px; }
.g-ref .big.narrow { width: 43px; }
.g-mod .big.slim { width: 30px; }
.big.pressed { padding: 4px 0; margin-bottom: 2px; background: #b1b1b1; border: 1px solid #9c9c9c; }
.stack { display: flex; flex-direction: column; padding: 1px 0 0 2px; }
.stack button { display: flex; align-items: center; gap: 4px; height: 25px; }
.stack svg { width: 20px; height: 20px; }
.stack.short { width: 59px; padding-left: 1px; }
.collapse { margin: auto 6px 9px auto; }
.collapse svg { width: 13px; height: 8px; }

/* command tabs */
.tabrow { display: flex; justify-content: space-between; height: 23px; background: #fff; border-top: 1px solid #aaa; }
.tabs { display: flex; }
.tabs button { background: #d5d5d5; border: 1px solid #a8a8a8; border-left: 0; border-top: 0; }
.tabs button:nth-child(1) { width: 61px; }
.tabs button:nth-child(2) { width: 47px; }
.tabs button:nth-child(3) { width: 58px; }
.tabs button:nth-child(4) { width: 55px; }
.tabs button:nth-child(5) { width: 57px; }
.tabs button:nth-child(6) { width: 107px; }
.tabs button:nth-child(7) { width: 134px; }
.tabs button:nth-child(8) { width: 122px; }
.tabs button:nth-child(9) { width: 147px; }
.tabs button:nth-child(10) { width: 149px; }
.tabs .active { margin-top: -1px; background: #f9f9f9; font-size: 11px; font-weight: 700; color: #111; }
.doc-buttons { display: flex; align-items: center; gap: 10px; padding: 5px 9px 0 0; color: #929292; }
.doc-buttons svg { width: 15px; height: 15px; }

/* feature tree panel */
.workspace { flex: 1; display: flex; background: #fff; min-height: 0; }
.panel { position: relative; display: flex; flex-direction: column; width: 181px; background: #f7f7f7; border-right: 1px solid #999; border-left: 1px solid #ccc; }
.grip { display: grid; place-items: center; height: 19px; margin-top: 2px; border-top: 1px solid #ccc; border-bottom: 1px solid #ccc; }
.dot { width: 7px; height: 7px; border: 1px solid #999; border-radius: 50%; background: #ddd; }
.panel-tabs { position: relative; display: flex; height: 26px; margin-top: 1px; overflow: hidden; border-top: 1px solid #999; }
.panel-tabs > button { display: grid; place-items: center; flex: none; width: 35px; background: #d5d5d5; border-right: 1px solid #aaa; border-bottom: 1px solid #aaa; }
.panel-tabs > .active { background: #f7f7f7; border-bottom: 0; }
.panel-tabs > button svg { width: 20px; height: 20px; }
.scrollers { position: absolute; right: 0; bottom: 0; display: flex; }
.scrollers button { display: grid; place-items: center; width: 15px; height: 15px; background: #fafafa; border: 1px solid #ccc; color: #111; }
.scrollers svg { width: 4px; height: 7px; }
.flip { transform: scaleX(-1); }
.filter { display: flex; align-items: center; height: 25px; margin: 0 3px 0 2px; padding-left: 3px; border: 1px solid #ccc; }
.filter svg { width: 19px; height: 19px; }
.filter input { flex: 1; min-width: 0; outline: 0; }
.tree { display: grid; grid-auto-rows: 1fr; height: 323px; margin: 0; padding: 0 0 0 25px; list-style: none; border-bottom: 3px solid #3e78b0; font-family: Lato, "Noto Sans", sans-serif; font-variant-ligatures: none; }
.tree li { position: relative; display: flex; align-items: center; gap: 4px; min-width: 0; white-space: nowrap; }
.tree svg { width: 19px; height: 18px; }
.tree .root { margin-left: -22px; gap: 3px; }
.tree .has::before { content: ""; position: absolute; left: -16px; border: 4px solid transparent; border-left: 5px solid #555; border-right: 0; }
.hscroll { display: flex; align-items: center; height: 16px; margin-top: auto; margin-bottom: 4px; background: #f0f0f0; }
.hscroll button { display: grid; place-items: center; width: 17px; }
.hscroll svg { width: 6px; height: 10px; }
.track { flex: 1; align-self: stretch; }
.thumb { width: 50%; height: 100%; background: #cdcdcd; }
.splitter { position: absolute; left: 179px; top: 222px; display: grid; place-items: center; width: 9px; height: 40px; background: #f7f7f7; border: 1px solid #aaa; border-left: 0; }

/* graphics area */
.viewport { position: relative; flex: 1; display: grid; justify-items: center; align-items: start; }
.headsup, .model { grid-area: 1 / 1; }
.headsup { display: flex; gap: 5px; padding-top: 4px; }
.headsup svg { width: 20px; height: 20px; }
.headsup .drop { display: flex; align-items: center; gap: 5px; }
.headsup .caret { width: 5px; height: 3px; color: #888; }
.model { width: 452px; height: 447px; margin-top: 19px; }
.triad { position: absolute; left: 8px; bottom: 0; font: 700 14px/18px Lato, sans-serif; color: #111; }
.triad svg { width: 58px; height: 54px; margin: 0 0 18px 4px; font: 8px/10px "Liberation Sans", sans-serif; }
.taskpane { position: absolute; right: 0; top: 28px; display: flex; flex-direction: column; border: 1px solid #aaa; border-right: 0; }
.taskpane button { display: grid; place-items: center; width: 24px; height: 24px; background: #d5d5d5; border-bottom: 1px solid #aaa; }
.taskpane .active { background: #fff; }
.taskpane svg { width: 20px; height: 20px; }

/* sheets and status */
.sheets { display: flex; height: 18px; background: #f3f3f3; border-top: 1px solid #bbb; border-bottom: 1px solid #aaa; }
.steps { display: flex; width: 66px; color: #777b96; background: #a7aac0; }
.steps button { display: grid; place-items: center; flex: 1; border: 1px solid #8d90a8; }
.steps svg { width: 10px; height: 10px; }
.sheet { width: 114px; padding-right: 6px; background: #d5d5d5; border-right: 1px solid #999; }
.sheet.active { width: 59px; padding: 0 0 0 4px; background: #fcfcfc; font-weight: 700; color: #111; }
.status { display: flex; align-items: center; height: 17px; padding-right: 2px; background: #f7f7f7; }
.version { flex: 1; }
.mode { width: 149px; }
.units { display: flex; align-items: center; gap: 16px; width: 76px; }
.units .caret { width: 4px; height: 3px; }
.flip-v { transform: scaleY(-1); }
.tag svg { width: 18px; height: 14px; }
.edge { height: 2px; background: linear-gradient(90deg, #32363f 4%, #ccc 4%, #ccc 26%, #32363f 26%); }
```
